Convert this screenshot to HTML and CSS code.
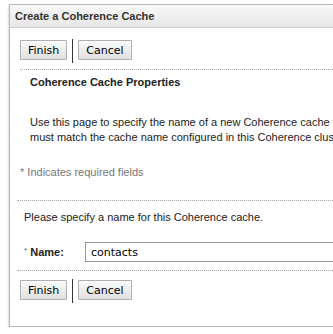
FILE: index.html
```html
<!DOCTYPE html>
<html lang="en">
<head>
  <meta charset="UTF-8">
  <title>Create a Coherence Cache</title>
  <link rel="stylesheet" href="styles.css">
</head>
<body>
  <div class="dialog">
    <div class="dialog-header">Create a Coherence Cache</div>
    <div class="dialog-body">
      <div class="button-bar">
        <button type="button" class="btn">Finish</button>
        <span class="btn-sep"></span>
        <button type="button" class="btn">Cancel</button>
      </div>
      <div class="section">
        <h2 class="section-title">Coherence Cache Properties</h2>
        <p class="section-text">Use this page to specify the name of a new Coherence cache that<br>must match the cache name configured in this Coherence cluster.</p>
      </div>
      <div class="required-note">* Indicates required fields</div>
      <div class="form-section">
        <p class="form-intro">Please specify a name for this Coherence cache.</p>
        <div class="form-row">
          <label for="name" class="form-label"><span class="star">*</span> Name:</label>
          <input type="text" id="name" class="form-input" value="contacts">
        </div>
      </div>
      <div class="button-bar bottom">
        <button type="button" class="btn">Finish</button>
        <span class="btn-sep"></span>
        <button type="button" class="btn">Cancel</button>
      </div>
    </div>
  </div>
</body>
</html>
```

FILE: styles.css
```css
body {
  margin: 0;
  padding: 4px 0 0 9px;
  background-color: #fff;
  font-family: "Liberation Sans", Arial, sans-serif;
  font-size: 11px;
  color: #000;
  overflow: hidden;
}

.dialog {
  width: 340px;
  height: 323px;
  border: 1px solid #b8b8b8;
  border-right: none;
  box-shadow: 0 2px 2px rgba(0, 0, 0, 0.35);
  box-sizing: border-box;
}

.dialog-header {
  height: 22px;
  line-height: 22px;
  padding-left: 5px;
  font-weight: bold;
  color: #333;
  background: linear-gradient(#f8f8f8, #e6e6e6);
  border-bottom: 1px solid #cfcfcf;
}

.dialog-body {
  padding: 11px 0 0 10px;
}

.button-bar {
  display: flex;
  align-items: flex-start;
  padding-bottom: 6px;
  border-bottom: 1px dotted #aaa;
}

.button-bar.bottom {
  border-bottom: none;
  margin-top: 8px;
}

.btn {
  font-family: "DejaVu Sans", sans-serif;
  font-size: 11px;
  color: #000;
  height: 20px;
  margin-top: 1px;
  padding: 0 7px;
  border: 1px solid #b0b0b0;
  border-radius: 1px;
  background: linear-gradient(#fafafa, #e0e0e0);
}

.btn-sep {
  width: 1px;
  height: 24px;
  margin: 0 5px;
  background-color: #333;
}

.section {
  padding-left: 10px;
}

.section-title {
  margin: 5px 0 0;
  font-size: 11px;
  line-height: 14px;
  font-weight: bold;
  color: #222;
}

.section-text {
  margin: 26px 0 0;
  line-height: 15px;
  font-size: 11px;
  white-space: nowrap;
  color: #222;
}

.required-note {
  margin-top: 20px;
  line-height: 14px;
  color: #777;
}

.form-section {
  margin: 21px 0 0 -3px;
  padding: 9px 0 8px 7px;
  border-top: 1px dotted #aaa;
  border-bottom: 1px dotted #aaa;
}

.form-intro {
  margin: 0;
  line-height: 14px;
  color: #222;
}

.form-row {
  display: flex;
  align-items: center;
  margin-top: 18px;
}

.form-label {
  width: 61px;
  font-weight: bold;
  color: #222;
}

.star {
  font-weight: normal;
  font-size: 8px;
  color: #555;
  vertical-align: top;
}

.form-input {
  width: 260px;
  height: 20px;
  padding: 0 5px;
  box-sizing: border-box;
  border: 1px solid #999;
  font-family: "DejaVu Sans", sans-serif;
  font-size: 11px;
}
```
